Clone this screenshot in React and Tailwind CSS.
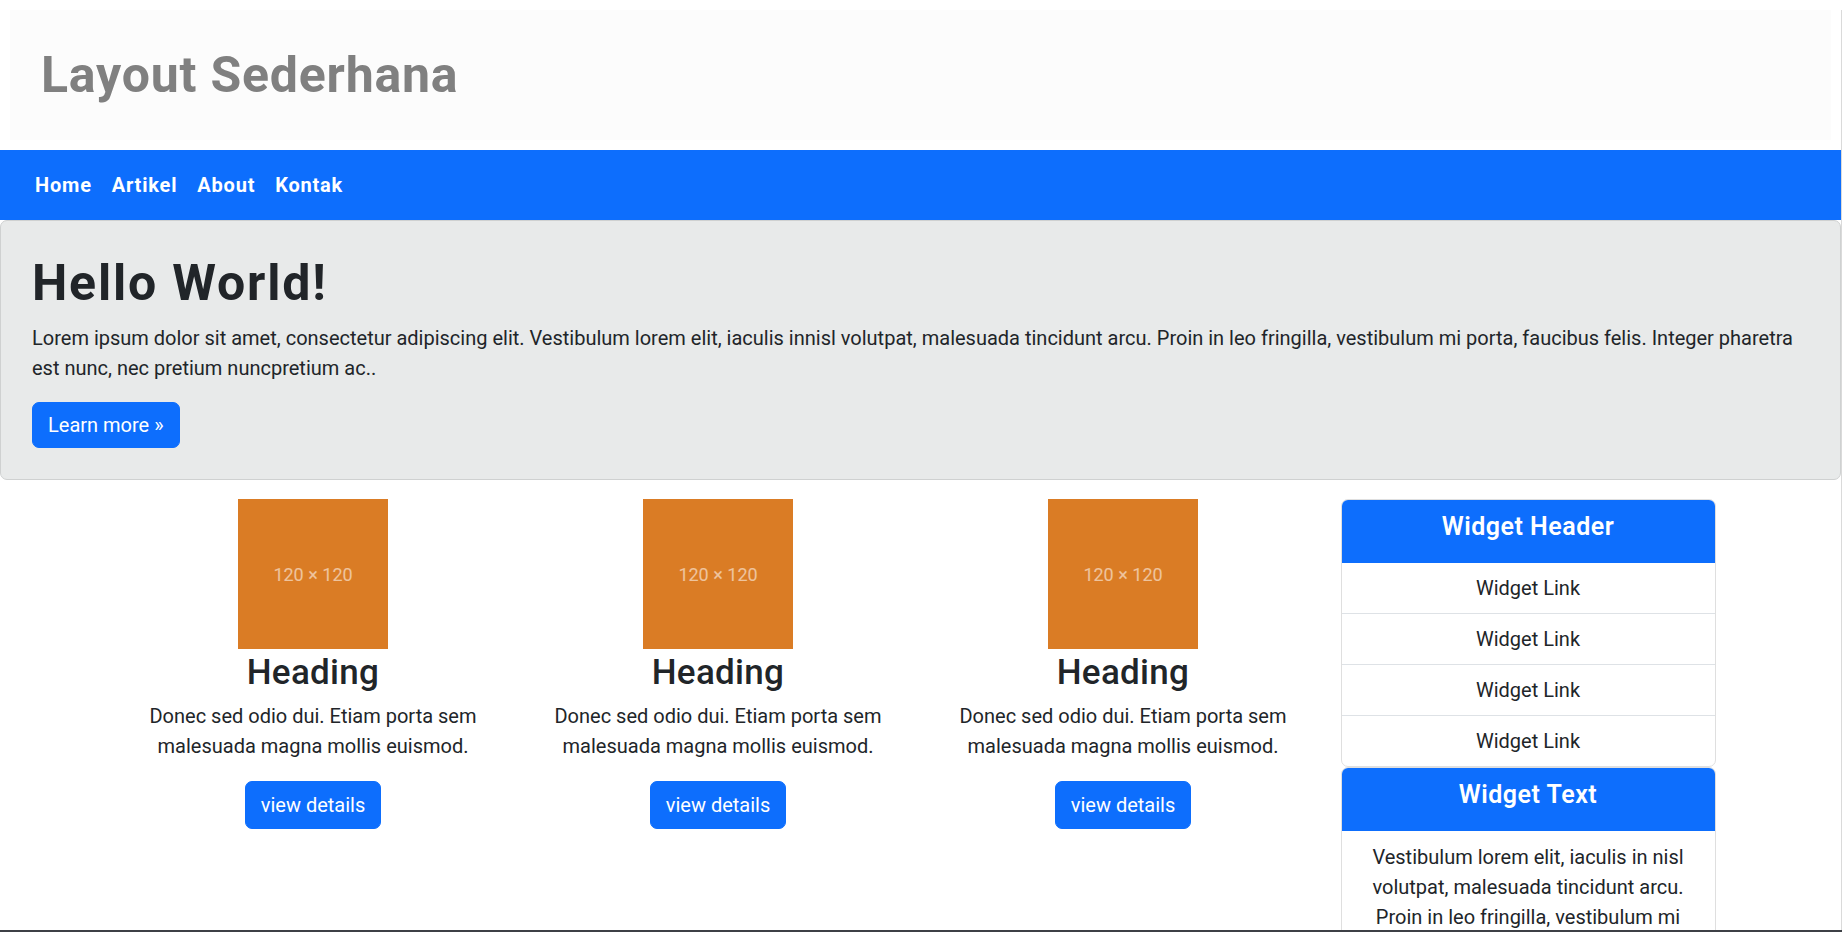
const cards = [1, 2, 3];
const links = ["Home", "Artikel", "About", "Kontak"];

const Placeholder = () => (
  <div className="w-[150px] h-[150px] bg-[#da7c25] flex items-center justify-center text-[18px] text-white/55">
    120 × 120
  </div>
);

const Card = () => (
  <div className="flex flex-col items-center text-center">
    <Placeholder />
    <h3 className="text-[35px] font-medium leading-[42px] pt-[3px] mb-[7px] tracking-[0.3px] text-[#212529]">Heading</h3>
    <p className="text-[20px] leading-[30px] mb-[20px] text-[#212529]">
      Donec sed odio dui. Etiam porta sem malesuada magna mollis euismod.
    </p>
    <a className="bg-[#0d6efd] text-white rounded-[7px] px-[15px] py-[8px] text-[20px] leading-[30px] border border-[#0d6efd]">
      view details
    </a>
  </div>
);

const WidgetHead = ({ title }) => (
  <div className="bg-[#0d6efd] pt-[12px] pb-[20px] border-b border-[#0d6efd] text-center">
    <h5 className="text-[25px] font-semibold leading-[30px] tracking-[0.5px] text-white">{title}</h5>
  </div>
);

export default function App() {
  return (
    <div className="min-h-screen bg-white border-r border-[#dadada] font-['Roboto',sans-serif] text-[#212529]">
      {/* Top title */}
      <header className="m-[10px] h-[130px] bg-[#fcfcfc] flex items-center px-[31px]">
        <h1 className="text-[50px] font-bold leading-[60px] tracking-[0.8px] text-[#808080]">Layout Sederhana</h1>
      </header>

      {/* Nav */}
      <nav className="h-[70px] bg-[#0d6efd] flex items-center gap-[20px] px-[35px]">
        {links.map((l) => (
          <a key={l} className="text-[20px] font-bold text-white leading-[30px] tracking-[0.8px]">{l}</a>
        ))}
      </nav>

      {/* Jumbotron */}
      <section className="rounded-[7px] border border-[#cfd1d1] bg-[#e8eaea] px-[31px] pt-[32px] pb-[31px]">
        <h1 className="text-[50px] font-bold leading-[60px] mb-[10px] tracking-[1.8px] text-[#212529]">Hello World!</h1>
        <p className="text-[20px] leading-[30px] mb-[19px]">
          Lorem ipsum dolor sit amet, consectetur adipiscing elit. Vestibulum lorem elit, iaculis innisl volutpat, malesuada tincidunt arcu. Proin in leo fringilla, vestibulum mi porta, faucibus felis. Integer pharetra est nunc, nec pretium nuncpretium ac..
        </p>
        <a className="inline-block bg-[#0d6efd] text-white rounded-[7px] px-[15px] py-[7px] text-[20px] leading-[30px] border border-[#0d6efd]">
          Learn more »
        </a>
      </section>

      {/* Content */}
      <main className="w-[1590px] mx-auto mt-[19px] grid grid-cols-4 gap-[30px] items-start">
        {cards.map((c) => (
          <Card key={c} />
        ))}

        <aside className="flex flex-col">
          <div className="border border-[#dfdfdf] rounded-[7px] overflow-hidden">
            <WidgetHead title="Widget Header" />
            {[1, 2, 3, 4].map((i) => (
              <div key={i} className="py-[10px] text-center text-[20px] leading-[30px] border-b last:border-b-0 border-[#dee2e6]">
                Widget Link
              </div>
            ))}
          </div>
          <div className="border border-[#dfdfdf] rounded-[7px] overflow-hidden">
            <WidgetHead title="Widget Text" />
            <p className="px-[20px] pt-[11px] pb-[20px] text-center text-[20px] leading-[30px]">
              Vestibulum lorem elit, iaculis in nisl volutpat, malesuada tincidunt arcu. Proin in leo fringilla, vestibulum mi porta, faucibus felis. Integer pharetra est nunc, nec pretium nunc pretium ac.
            </p>
          </div>
        </aside>
      </main>

      <div className="fixed bottom-0 inset-x-0 h-[2px] bg-[#3d4046]" />
    </div>
  );
}
